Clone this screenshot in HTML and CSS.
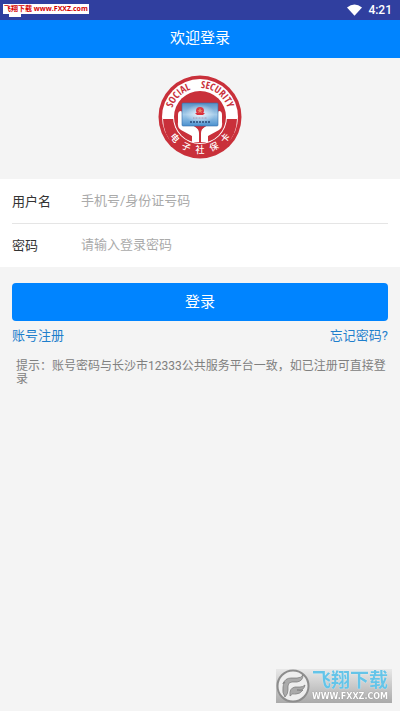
FILE: index.html
```
<!DOCTYPE html>
<html lang="zh-CN">

<head>
    <meta charset="utf-8">
    <meta name="viewport" content="width=device-width, initial-scale=1.0" />
    <title>欢迎登录</title>
    <link rel="stylesheet" href="styles.css">
</head>

<body>
    <!-- Status bar -->
    <div class="status-bar">
        <span class="notice"></span>
        <span class="site-tag">飞翔下载 www.FXXZ.com</span>
        <svg class="wifi" viewBox="0 0 16 12">
            <path d="M0 3.2Q8-2.8 16 3.2L8 12Z" fill="#fff" />
        </svg>
        <span class="clock">4:21</span>
    </div>

    <header class="title-bar">
        <h1>欢迎登录</h1>
    </header>

    <main>
        <!-- Logo -->
        <div class="logo-holder">
            <svg class="logo" viewBox="0 0 84 84" role="img" aria-label="电子社保卡">
                <defs>
                    <linearGradient id="card" x1="0" y1="0" x2="0" y2="1">
                        <stop offset="0" stop-color="#568fc5" />
                        <stop offset="0.5" stop-color="#a5ccea" />
                        <stop offset="1" stop-color="#4b91cf" />
                    </linearGradient>
                    <radialGradient id="glow">
                        <stop offset="0" stop-color="#fff" stop-opacity="0.8" />
                        <stop offset="1" stop-color="#fff" stop-opacity="0" />
                    </radialGradient>
                    <path id="top-arc" d="M13 42A29 29 0 0 1 71 42" />
                    <path id="bottom-arc" d="M6 42A36 36 0 0 0 78 42" />
                </defs>
                <circle cx="42" cy="42" r="41.5" fill="#c9303a" />
                <circle cx="42" cy="42" r="38" fill="#fff" />
                <path d="M5 44A37 37 0 0 0 79 44Z" fill="#c9303a" />
                <circle cx="42" cy="42" r="27" fill="#fff" />
                <circle cx="42" cy="42" r="26" fill="#c9303a" />
                <!-- Hands -->
                <g id="hand">
                    <path d="M23 36q-3 0-3 4v7q-1 5 3 8l11 6v6h7v-9q0-4-4-6l-9-4q-4-1-4-7v-3q0-2-1-2z" fill="#fff" />
                    <path d="M27 45q2-1 4 2l7 6q3 3 1 6l-4-1l-9-6z" fill="#fff" />
                </g>
                <use href="#hand" transform="matrix(-1 0 0 1 84 0)" />
                <!-- Card -->
                <rect x="24" y="28" width="36" height="23" rx="1" fill="url(#card)" stroke="#386da9" stroke-width="0.6" />
                <ellipse cx="42" cy="39" rx="15" ry="10" fill="url(#glow)" />
                <path d="M38 36a4 4 0 0 1 8 0l-1 3h-6z" fill="#dd3544" />
                <path d="M37 38h10l-2 2h-6z" fill="#d9303c" />
                <path d="M42 33l1 2h2l-2 1l1 2l-2-1l-2 1l1-2l-2-1h2z" fill="#e58a65" />
                <path d="M35 43h14" stroke="#a07b96" stroke-width="0.7" stroke-dasharray="1 0.5" />
                <path d="M32 47h20" stroke="#294977" stroke-width="1.5" stroke-dasharray="2 1" />
                <text class="logo-en">
                    <textPath href="#top-arc" startOffset="50%" text-anchor="middle">SOCIAL &#160;&#160; SECURITY</textPath>
                </text>
                <text class="logo-cn">
                    <textPath href="#bottom-arc" startOffset="50%" text-anchor="middle">电&#160;&#160;&#160;子&#160;&#160;&#160;社&#160;&#160;&#160;保&#160;&#160;&#160;卡</textPath>
                </text>
            </svg>
        </div>

        <form>
            <div class="fields">
                <div class="field">
                    <label for="username">用户名</label>
                    <input id="username" type="text" placeholder="手机号/身份证号码">
                </div>
                <div class="field">
                    <label for="password">密码</label>
                    <input id="password" type="password" placeholder="请输入登录密码">
                </div>
            </div>
            <div class="actions">
                <button class="login" type="submit">登录</button>
                <div class="links">
                    <a href="#register">账号注册</a>
                    <a href="#forgot">忘记密码?</a>
                </div>
                <p class="hint">提示：账号密码与长沙市12333公共服务平台一致，如已注册可直接登录</p>
            </div>
        </form>
    </main>

    <!-- Download site mark -->
    <div class="mark">
        <svg class="mark-icon" viewBox="0 0 34 34">
            <circle cx="17" cy="17" r="15.5" fill="#eee" stroke="#8d8d8d" stroke-width="2" />
            <path d="M7 15q2-6 8-6h6q4 0 6-3q0 6-6 7h-5q-4 0-4 4v4q0 4-3 7q-3-4-2-10q0-3 2-5q-2 0-2 2z" fill="#aaa" stroke="#777" stroke-width="0.7" />
            <path d="M14 27q-1-8 5-9h5q3 0 5-2q-1 5-5 5h-3q3 1 6 0q-3 4-7 4q-4-1-6 2z" fill="#aaa" stroke="#777" stroke-width="0.7" />
        </svg>
        <div class="mark-text">
            <span class="mark-name">飞翔下载</span>
            <span class="mark-url">WWW.FXXZ.COM</span>
        </div>
    </div>
</body>

</html>
```
FILE: styles.css
```
* {
    box-sizing: border-box;
}

body {
    margin: 0;
    min-height: 100vh;
    background: #f4f4f4;
    font-family: Roboto, "Noto Sans CJK SC", sans-serif;
    font-size: 13px;
    color: #333;
}

.status-bar {
    position: relative;
    display: flex;
    align-items: center;
    gap: 6px;
    height: 20px;
    padding: 0 8px 0 3px;
    background: #303f9f;
    color: #fff;
}

.notice {
    position: absolute;
    left: 9px;
    top: 8px;
    width: 12px;
    height: 9px;
    background: #fff;
}

.site-tag {
    position: relative;
    margin-top: -2px;
    margin-right: auto;
    padding: 0 1px;
    background: #fff;
    color: #d40000;
    font-family: "Open Sans", "Noto Sans CJK SC", sans-serif;
    font-size: 7px;
    font-weight: bold;
    line-height: 10px;
    white-space: nowrap;
}

.wifi {
    width: 15px;
    height: 12px;
}

.clock {
    font-size: 12px;
    font-weight: 500;
}

.title-bar {
    height: 38px;
    background: #0084ff;
    color: #fff;
    text-align: center;
}

.title-bar h1 {
    margin: 0;
    font-size: 15px;
    font-weight: normal;
    line-height: 36px;
}

.logo-holder {
    display: flex;
    justify-content: center;
    padding: 17px 0 20px;
}

.logo {
    width: 84px;
    height: 84px;
}

.logo-en {
    fill: #c9303a;
    font-family: "Liberation Sans Narrow", "Open Sans Condensed", "Roboto Condensed", "Liberation Sans", sans-serif;
    font-size: 10px;
    font-weight: bold;
}

.logo-cn {
    fill: #fff;
    font-size: 9px;
    font-weight: 500;
}

.fields {
    padding: 0 12px;
    background: #fff;
}

.field {
    display: flex;
    align-items: center;
    height: 44px;
    padding-bottom: 2px;
}

.field + .field {
    border-top: 1px solid #e5e5e5;
}

.field label {
    width: 69px;
}

.field input {
    flex: 1;
    min-width: 0;
    padding: 0;
    border: 0;
    outline: 0;
    background: none;
    font: inherit;
}

.field input::placeholder {
    color: #aaa;
}

.actions {
    padding: 16px 12px;
}

.login {
    display: block;
    width: 100%;
    height: 38px;
    padding: 0 0 4px;
    border: 0;
    border-radius: 4px;
    background: #0084ff;
    color: #fff;
    font: inherit;
    font-size: 15px;
}

.links {
    display: flex;
    justify-content: space-between;
    padding-top: 5px;
    line-height: 20px;
}

.links a {
    color: #1f7fcc;
    text-decoration: none;
}

.hint {
    margin: 14px 0 0;
    padding-left: 4px;
    color: #808080;
    font-size: 12px;
    line-height: 13px;
}

.mark {
    position: fixed;
    right: 8px;
    bottom: 8px;
    display: flex;
    align-items: center;
    height: 34px;
    padding-right: 2px;
    background: linear-gradient(#e8e8e8, #aaa);
}

.mark-icon {
    width: 34px;
    height: 34px;
}

.mark-text {
    display: flex;
    flex-direction: column;
    align-items: center;
    width: 80px;
}

.mark-name {
    color: #65c4e8;
    font-size: 19px;
    font-weight: bold;
    line-height: 22px;
    text-shadow: 0 0 1px #fff;
}

.mark-url {
    color: #fff;
    font-family: "DejaVu Sans", sans-serif;
    font-size: 8px;
    font-weight: bold;
    line-height: 10px;
    text-shadow: 0 0 1px #777;
}
```
